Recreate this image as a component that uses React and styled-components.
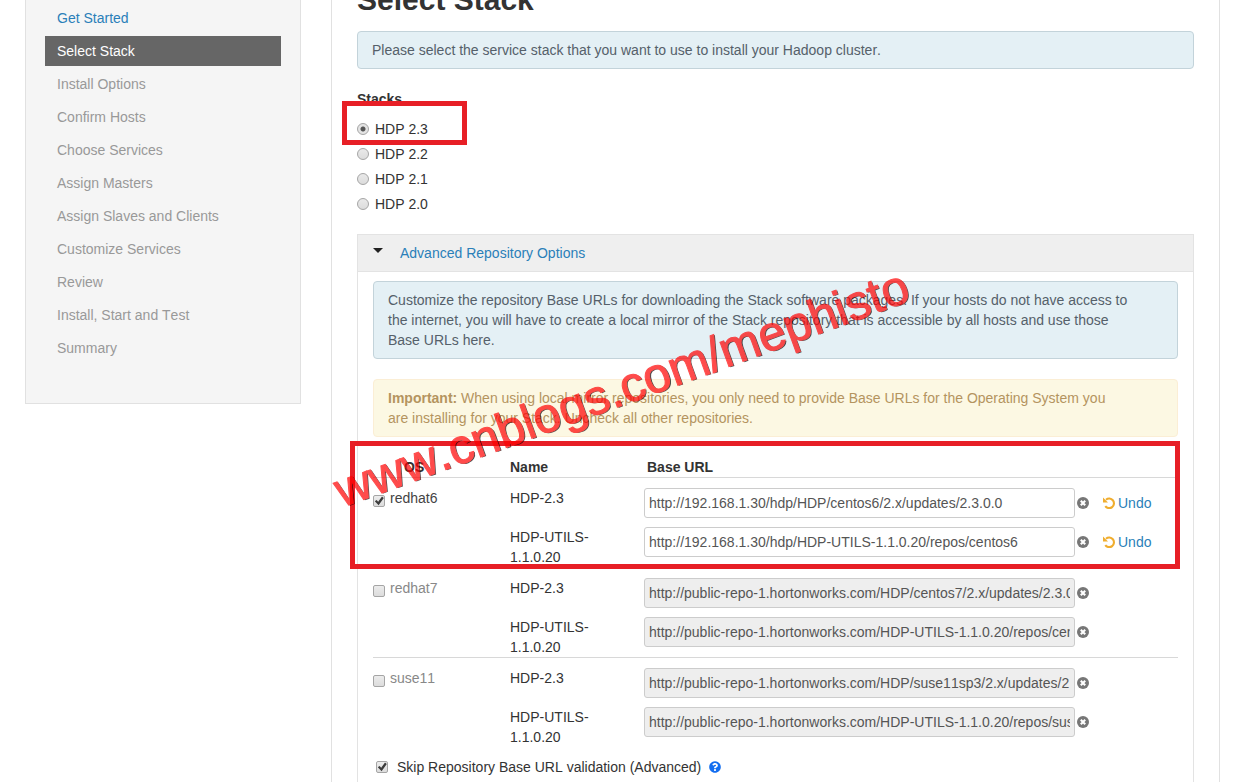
import { useState } from "react";
import styled, { createGlobalStyle } from "styled-components";
import { FaQuestionCircle } from "react-icons/fa";

const steps = [
  "Get Started",
  "Select Stack",
  "Install Options",
  "Confirm Hosts",
  "Choose Services",
  "Assign Masters",
  "Assign Slaves and Clients",
  "Customize Services",
  "Review",
  "Install, Start and Test",
  "Summary",
];

const stacks = ["HDP 2.3", "HDP 2.2", "HDP 2.1", "HDP 2.0"];

const systems = [
  {
    os: "redhat6",
    repos: [
      { name: "HDP-2.3", url: "http://192.168.1.30/hdp/HDP/centos6/2.x/updates/2.3.0.0" },
      { name: "HDP-UTILS-1.1.0.20", url: "http://192.168.1.30/hdp/HDP-UTILS-1.1.0.20/repos/centos6" },
    ],
  },
  {
    os: "redhat7",
    repos: [
      { name: "HDP-2.3", url: "http://public-repo-1.hortonworks.com/HDP/centos7/2.x/updates/2.3.0.0" },
      { name: "HDP-UTILS-1.1.0.20", url: "http://public-repo-1.hortonworks.com/HDP-UTILS-1.1.0.20/repos/centos7" },
    ],
  },
  {
    os: "suse11",
    repos: [
      { name: "HDP-2.3", url: "http://public-repo-1.hortonworks.com/HDP/suse11sp3/2.x/updates/2.3.0.0" },
      { name: "HDP-UTILS-1.1.0.20", url: "http://public-repo-1.hortonworks.com/HDP-UTILS-1.1.0.20/repos/suse11sp3" },
    ],
  },
];

function ClearIcon() {
  return (
    <svg width="12" height="12" viewBox="0 0 12 12" aria-hidden="true">
      <circle cx="6" cy="6" r="6" fill="#777" />
      <path d="M3.800 3.800l4.400 4.400M8.200 3.800l-4.400 4.400" stroke="#fff" strokeWidth="2.1" />
    </svg>
  );
}

function UndoIcon() {
  return (
    <svg width="12" height="12" viewBox="0 0 12 12" aria-hidden="true">
      <path d="M3 2.700A4.800 4.800 0 1 1 2.300 9.200" fill="none" stroke="#f0ad2e" strokeWidth="2.100" />
      <path d="M0 .4v5h5z" fill="#f0ad2e" />
    </svg>
  );
}

function Repository({ system, checked, onToggle }) {
  return (
    <tbody>
      {system.repos.map((repo, i) => (
        <tr key={repo.name}>
          {i === 0 && (
            <Cell $first rowSpan={2}>
              <OsLabel $off={!checked}>
                <Checkbox type="checkbox" checked={checked} onChange={onToggle} />
                {system.os}
              </OsLabel>
            </Cell>
          )}
          <Cell $first={i === 0}>
            <RepoName>{repo.name}</RepoName>
          </Cell>
          <Cell $first={i === 0}>
            <UrlRow>
              <UrlInput
                type="text"
                defaultValue={repo.url}
                disabled={!checked}
                aria-label={`${system.os} ${repo.name} base URL`}
              />
              <ClearButton type="button" aria-label="Clear">
                <ClearIcon />
              </ClearButton>
              <UndoSlot>
                {checked && (
                  <Undo href="#">
                    <UndoIcon />
                    Undo
                  </Undo>
                )}
              </UndoSlot>
            </UrlRow>
          </Cell>
        </tr>
      ))}
    </tbody>
  );
}

export default function App() {
  const [stack, setStack] = useState("HDP 2.3");
  const [enabled, setEnabled] = useState(["redhat6"]);
  const [skip, setSkip] = useState(true);

  function toggle(os) {
    setEnabled(enabled.includes(os) ? enabled.filter((e) => e !== os) : [...enabled, os]);
  }

  return (
    <>
      <GlobalStyle />
      <Page>
        <Columns>
          <Sidebar>
            {steps.map((step, i) => (
              <Step key={step} href="#" $done={i === 0} $active={i === 1}>
                {step}
              </Step>
            ))}
          </Sidebar>
          <Main>
            <Title>Select Stack</Title>
            <Alert>
              Please select the service stack that you want to use to install your Hadoop cluster.
            </Alert>

            <StackList>
              <Legend>Stacks</Legend>
              {stacks.map((name) => (
                <StackLabel key={name}>
                  <Radio
                    type="radio"
                    name="stack"
                    checked={stack === name}
                    onChange={() => setStack(name)}
                  />
                  {name}
                  {name === "HDP 2.3" && <StackMark />}
                </StackLabel>
              ))}
            </StackList>

            <Accordion>
              <AccordionHeader type="button">
                <Caret />
                Advanced Repository Options
              </AccordionHeader>
              <AccordionBody>
                <Alert>
                  Customize the repository Base URLs for downloading the Stack software packages. If
                  your hosts do not have access to the internet, you will have to create a local
                  mirror of the Stack repository that is accessible by all hosts and use those Base
                  URLs here.
                </Alert>
                <Alert $warning>
                  <strong>Important:</strong> When using local mirror repositories, you only need to
                  provide Base URLs for the Operating System you are installing for your Stack.
                  Uncheck all other repositories.
                </Alert>
                <TableWrap>
                  <Table>
                    <colgroup>
                      <OsColumn />
                      <NameColumn />
                      <col />
                    </colgroup>
                    <thead>
                      <tr>
                        <HeadCell $indent={31}>OS</HeadCell>
                        <HeadCell>Name</HeadCell>
                        <HeadCell $indent={3}>Base URL</HeadCell>
                      </tr>
                    </thead>
                    {systems.map((system) => (
                      <Repository
                        key={system.os}
                        system={system}
                        checked={enabled.includes(system.os)}
                        onToggle={() => toggle(system.os)}
                      />
                    ))}
                  </Table>
                  <TableMark />
                </TableWrap>
                <SkipLabel>
                  <Checkbox type="checkbox" checked={skip} onChange={() => setSkip(!skip)} />
                  <span>Skip Repository Base URL validation (Advanced)</span>
                  <FaQuestionCircle size={12} color="#136ef0" />
                </SkipLabel>
              </AccordionBody>
            </Accordion>
          </Main>
        </Columns>
        <Watermark>www.cnblogs.com/mephisto</Watermark>
      </Page>
    </>
  );
}

const GlobalStyle = createGlobalStyle`
  * {
    box-sizing: border-box;
  }
  body {
    margin: 0;
    background: #fff;
    color: #333;
    font-family: "Liberation Sans", Arial, sans-serif;
    font-size: 14px;
    line-height: 20px;
    font-kerning: none;
  }
  input, button {
    margin: 0;
    font: inherit;
    font-kerning: none;
  }
`;

const Page = styled.div`
  position: relative;
  display: flex;
  min-height: 100vh;
  overflow: hidden;
`;
/* the page is scrolled a little past its top edge */
const Columns = styled.div`
  flex: 1;
  display: flex;
  align-items: stretch;
  gap: 30px;
  margin-top: -20px;
  padding: 0 28px 0 25px;
`;
const Sidebar = styled.nav`
  flex: 0 0 276px;
  align-self: flex-start;
  display: flex;
  flex-direction: column;
  gap: 3px;
  padding: 22px 19px 40px;
  background: #f5f5f5;
  border: 1px solid #e1e1e1;
`;
const Step = styled.a`
  padding: 5px 12px;
  text-decoration: none;
  color: ${(p) => (p.$active ? "#fff" : p.$done ? "#2a7fb9" : "#999")};
  background: ${(p) => (p.$active ? "#666" : "transparent")};
`;
const Main = styled.main`
  flex: 1;
  min-width: 0;
  padding: 0 25px;
  border: solid #e1e1e1;
  border-width: 0 1px;
`;
const Title = styled.h2`
  margin: 0 0 11px;
  font-size: 30px;
  line-height: 40px;
`;
const Alert = styled.div`
  margin-bottom: 20px;
  padding: 8px ${(p) => (p.$warning ? "50px" : "35px")} 8px 14px;
  border: 1px solid ${(p) => (p.$warning ? "#fbeed5" : "#c3d3da")};
  border-radius: 4px;
  color: ${(p) => (p.$warning ? "#b4945f" : "#55606a")};
  background: ${(p) => (p.$warning ? "#fcf8e3" : "#e4f0f5")};
`;
const StackList = styled.div`
  display: flex;
  flex-direction: column;
  align-items: flex-start;
  gap: 5px;
  margin-bottom: 20px;
`;
const Legend = styled.div`
  margin-bottom: 5px;
  font-weight: bold;
`;
const StackLabel = styled.label`
  position: relative;
  display: flex;
  align-items: center;
  gap: 6px;
`;
const Radio = styled.input`
  appearance: none;
  width: 12px;
  height: 12px;
  border: 1px solid #a5a5a5;
  border-radius: 50%;
  background: linear-gradient(#e9e9e9, #dcdcdc);
  &:checked {
    background: radial-gradient(circle, #555 0 2px, #e4e4e4 3px);
  }
`;
const Checkbox = styled.input`
  appearance: none;
  flex: none;
  position: relative;
  width: 12px;
  height: 12px;
  border: 1px solid #a5a5a5;
  border-radius: 2px;
  background: linear-gradient(#ececec, #dcdcdc);
  &:checked::after {
    content: "";
    position: absolute;
    inset: 0;
    background: #3c3c3c;
    clip-path: polygon(8% 52%, 26% 40%, 42% 58%, 80% 6%, 98% 20%, 46% 92%);
  }
`;
const StackMark = styled.span`
  position: absolute;
  left: -15px;
  top: -18px;
  width: 125px;
  height: 44px;
  border: 5px solid #e71f26;
  pointer-events: none;
`;
const Accordion = styled.section`
  border: 1px solid #e3e3e3;
  border-bottom: 0;
`;
const AccordionHeader = styled.button`
  display: flex;
  align-items: center;
  gap: 17px;
  width: 100%;
  padding: 8px 15px;
  border: 0;
  border-bottom: 1px solid #e3e3e3;
  background: #efefef;
  color: #2a7fb9;
`;
const Caret = styled.span`
  margin-bottom: 6px;
  border: solid transparent;
  border-width: 5px 5px 0;
  border-top-color: #222;
`;
const AccordionBody = styled.div`
  padding: 9px 15px;
`;
const TableWrap = styled.div`
  position: relative;
  margin-bottom: 10px;
`;
const Table = styled.table`
  width: 100%;
  table-layout: fixed;
  border-collapse: separate;
  border-spacing: 0;
`;
const OsColumn = styled.col`
  width: 137px;
`;
const NameColumn = styled.col`
  width: 134px;
`;
const HeadCell = styled.th`
  padding: 0 0 0 ${(p) => p.$indent || 0}px;
  text-align: left;
`;
const Cell = styled.td`
  padding: ${(p) => (p.$first ? "10px 0 9px" : "0")};
  border-top: ${(p) => (p.$first ? "1px solid #d8d8d8" : "0")};
  vertical-align: top;
`;
const OsLabel = styled.label`
  display: flex;
  gap: 5px;
  color: ${(p) => (p.$off ? "#888" : "#444")};
  ${Checkbox} {
    margin-top: 7px;
  }
`;
const RepoName = styled.div`
  padding-right: 20px;
`;
const UrlRow = styled.div`
  display: flex;
  align-items: center;
`;
const UrlInput = styled.input`
  flex: 1;
  min-width: 0;
  height: 30px;
  padding: 4px;
  border: 1px solid #ccc;
  border-radius: 3px;
  background: #fff;
  color: #555;
  &:disabled {
    background: #eee;
  }
`;
const ClearButton = styled.button`
  display: flex;
  padding: 0 2px;
  border: 0;
  background: none;
`;
const UndoSlot = styled.div`
  flex: 0 0 87px;
  padding-left: 12px;
`;
const Undo = styled.a`
  display: flex;
  align-items: center;
  gap: 3px;
  color: #2a7fb9;
  text-decoration: none;
`;
const TableMark = styled.div`
  position: absolute;
  top: -16px;
  left: -23px;
  right: -2px;
  height: 128px;
  border: 5px solid #e71f26;
  pointer-events: none;
`;
const SkipLabel = styled.label`
  display: flex;
  align-items: center;
  padding-left: 3px;
  span {
    margin: 0 8px 0 9px;
  }
`;
const Watermark = styled.div`
  position: absolute;
  left: 328px;
  top: 469px;
  font-size: 49px;
  line-height: 48px;
  white-space: nowrap;
  color: #f00;
  -webkit-text-stroke: 1px #f00;
  text-shadow: 1px 1px 0 #000;
  opacity: 0.7;
  transform: rotate(-20deg);
  transform-origin: 0 0;
  pointer-events: none;
`;
